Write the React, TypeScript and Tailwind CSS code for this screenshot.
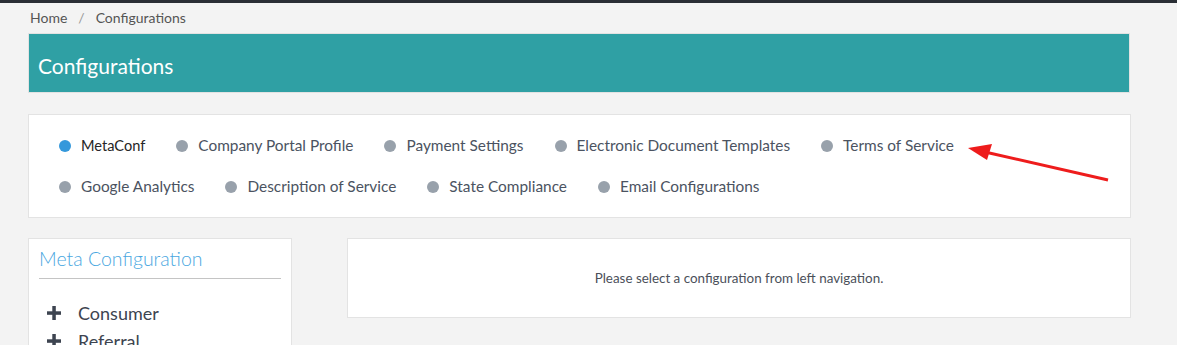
import React from "react";

const row1 = [
  { label: "MetaConf", active: true },
  { label: "Company Portal Profile" },
  { label: "Payment Settings" },
  { label: "Electronic Document Templates" },
  { label: "Terms of Service" },
];
const row2 = [
  { label: "Google Analytics" },
  { label: "Description of Service" },
  { label: "State Compliance" },
  { label: "Email Configurations" },
];

function Item({ label, active }: { label: string; active?: boolean }) {
  return (
    <div className="flex items-center gap-[10px] mr-[31px]">
      <span
        className={
          "w-[12px] h-[12px] rounded-full " +
          (active ? "bg-[#3498db]" : "bg-[#98a1ab]")
        }
      />
      <span className={active ? "text-[#262626] text-[14.6px]" : "text-[#4b5361]"}>{label}</span>
    </div>
  );
}

function Plus() {
  return (
    <svg width="14" height="14" viewBox="0 0 14 14" className="shrink-0">
      <rect x="5.3" y="0" width="3.5" height="14" fill="#3d4450" />
      <rect x="0" y="5.3" width="14" height="3.5" fill="#3d4450" />
    </svg>
  );
}

export default function App() {
  return (
    <div
      className="relative w-[1177px] h-[345px] overflow-hidden bg-[#f3f3f3]"
      style={{ fontFamily: "Lato, 'Liberation Sans', sans-serif" }}
    >
      <div className="h-[3px] bg-[#2a2e35]" />
      <div className="pl-[30px] pt-[4px] h-[30px] text-[14px] text-[#555] flex gap-[11px]">
        <span>Home</span>
        <span className="text-[#999]">/</span>
        <span>Configurations</span>
      </div>
      <div className="mx-[28px] w-[1102px] h-[60px] bg-[#2fa0a4] border border-[#e2e2e2] flex items-center pl-[9px] pt-[6px] text-white text-[21px]">
        Configurations
      </div>
      <div className="mt-[21px] ml-[28px] w-[1103px] h-[104px] bg-white border border-[#e3e3e3] pl-[30px] pt-[20px] text-[15.4px]">
        <div className="flex h-[22px] items-center">
          {row1.map((i) => (
            <Item key={i.label} {...i} />
          ))}
        </div>
        <div className="flex h-[22px] items-center mt-[19px]">
          {row2.map((i) => (
            <Item key={i.label} {...i} />
          ))}
        </div>
      </div>
      <div className="mt-[20px] ml-[28px] flex items-start gap-[55px]">
        <div className="w-[264px] h-[120px] bg-white border border-[#e3e3e3] px-[10px]">
          <div className="pt-[5px] pb-[5px] text-[19.5px] font-light text-[#4aa7df] border-b border-[#c4c4c4]">
            Meta Configuration
          </div>
          <div className="pt-[20px] pl-[8px] text-[18px] text-[#3d4450]">
            <div className="flex items-center gap-[17px] h-[28px]">
              <Plus />
              <span>Consumer</span>
            </div>
            <div className="flex items-center gap-[17px] h-[28px]">
              <Plus />
              <span>Referral</span>
            </div>
          </div>
        </div>
        <div className="w-[784px] h-[80px] bg-white border border-[#e3e3e3] flex items-center justify-center text-[13.4px] text-[#4b505a]">
          Please select a configuration from left navigation.
        </div>
      </div>
      <svg className="absolute left-0 top-0 pointer-events-none" width="1177" height="345">
        <line x1="1108" y1="180" x2="985" y2="152" stroke="#ee1c1c" strokeWidth="3" />
        <polygon points="968,148 992,144 987,160" fill="#ee1c1c" />
      </svg>
    </div>
  );
}
